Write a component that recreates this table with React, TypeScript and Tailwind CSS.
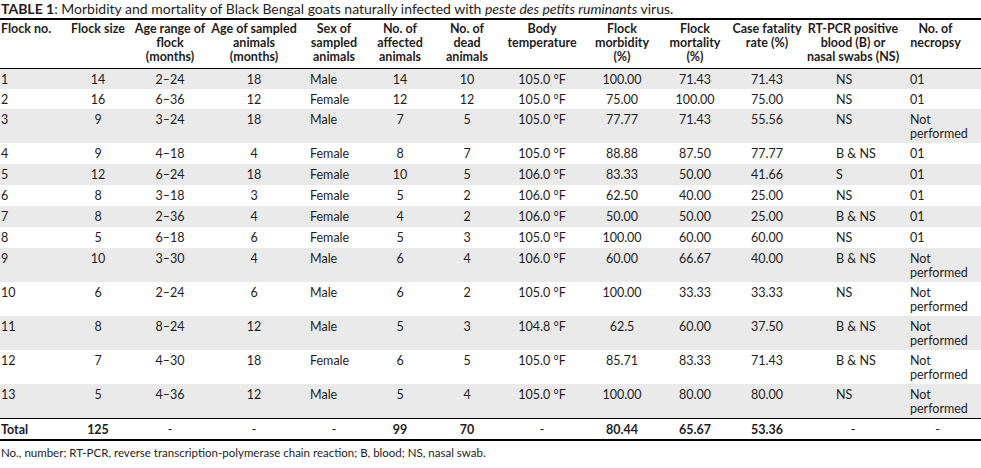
import React from 'react';

type Row = {
  no: string;
  size: string;
  range: string;
  age: string;
  sex: string;
  affected: string;
  dead: string;
  temp: string;
  morbidity: string;
  mortality: string;
  fatality: string;
  pcr: string;
  necropsy: string;
};

const rows: Row[] = [
  { no: '1', size: '14', range: '2–24', age: '18', sex: 'Male', affected: '14', dead: '10', temp: '105.0 °F', morbidity: '100.00', mortality: '71.43', fatality: '71.43', pcr: 'NS', necropsy: '01' },
  { no: '2', size: '16', range: '6–36', age: '12', sex: 'Female', affected: '12', dead: '12', temp: '105.0 °F', morbidity: '75.00', mortality: '100.00', fatality: '75.00', pcr: 'NS', necropsy: '01' },
  { no: '3', size: '9', range: '3–24', age: '18', sex: 'Male', affected: '7', dead: '5', temp: '105.0 °F', morbidity: '77.77', mortality: '71.43', fatality: '55.56', pcr: 'NS', necropsy: 'np' },
  { no: '4', size: '9', range: '4–18', age: '4', sex: 'Female', affected: '8', dead: '7', temp: '105.0 °F', morbidity: '88.88', mortality: '87.50', fatality: '77.77', pcr: 'B & NS', necropsy: '01' },
  { no: '5', size: '12', range: '6–24', age: '18', sex: 'Female', affected: '10', dead: '5', temp: '106.0 °F', morbidity: '83.33', mortality: '50.00', fatality: '41.66', pcr: 'S', necropsy: '01' },
  { no: '6', size: '8', range: '3–18', age: '3', sex: 'Female', affected: '5', dead: '2', temp: '106.0 °F', morbidity: '62.50', mortality: '40.00', fatality: '25.00', pcr: 'NS', necropsy: '01' },
  { no: '7', size: '8', range: '2–36', age: '4', sex: 'Female', affected: '4', dead: '2', temp: '106.0 °F', morbidity: '50.00', mortality: '50.00', fatality: '25.00', pcr: 'B & NS', necropsy: '01' },
  { no: '8', size: '5', range: '6–18', age: '6', sex: 'Female', affected: '5', dead: '3', temp: '105.0 °F', morbidity: '100.00', mortality: '60.00', fatality: '60.00', pcr: 'NS', necropsy: '01' },
  { no: '9', size: '10', range: '3–30', age: '4', sex: 'Male', affected: '6', dead: '4', temp: '106.0 °F', morbidity: '60.00', mortality: '66.67', fatality: '40.00', pcr: 'B & NS', necropsy: 'np' },
  { no: '10', size: '6', range: '2–24', age: '6', sex: 'Male', affected: '6', dead: '2', temp: '105.0 °F', morbidity: '100.00', mortality: '33.33', fatality: '33.33', pcr: 'NS', necropsy: 'np' },
  { no: '11', size: '8', range: '8–24', age: '12', sex: 'Male', affected: '5', dead: '3', temp: '104.8 °F', morbidity: '62.5', mortality: '60.00', fatality: '37.50', pcr: 'B & NS', necropsy: 'np' },
  { no: '12', size: '7', range: '4–30', age: '18', sex: 'Female', affected: '6', dead: '5', temp: '105.0 °F', morbidity: '85.71', mortality: '83.33', fatality: '71.43', pcr: 'B & NS', necropsy: 'np' },
  { no: '13', size: '5', range: '4–36', age: '12', sex: 'Male', affected: '5', dead: '4', temp: '105.0 °F', morbidity: '100.00', mortality: '80.00', fatality: '80.00', pcr: 'NS', necropsy: 'np' },
];

const widths = ['w-[62px]', 'w-[72px]', 'w-[72px]', 'w-[96px]', 'w-[64px]', 'w-[68px]', 'w-[66px]', 'w-[84px]', 'w-[76px]', 'w-[70px]', 'w-[74px]', 'w-[98px]', 'w-[79px]'];

const headers: React.ReactNode[] = [
  <span className="block text-left pl-[1px]">Flock no.</span>,
  <>Flock size</>,
  <>Age range of<br />flock<br />(months)</>,
  <>Age of sampled<br />animals<br />(months)</>,
  <>Sex of<br />sampled<br />animals</>,
  <>No. of<br />affected<br />animals</>,
  <>No. of<br />dead<br />animals</>,
  <>Body<br />temperature</>,
  <>Flock<br />morbidity<br />(%)</>,
  <>Flock<br />mortality<br />(%)</>,
  <>Case fatality<br />rate (%)</>,
  <>RT-PCR positive<br />blood (B) or<br />nasal swabs (NS)</>,
  <span className="block pr-[12px]">No. of<br />necropsy</span>,
];

const cell = 'align-top pt-[4px] whitespace-nowrap';

export default function App() {
  return (
    <div className="w-[981px] h-[468px] bg-white text-[#1f1c1d] font-['Lato','Liberation_Sans',sans-serif] text-[12.5px] leading-[14px]">
      {/* Caption */}
      <div className="h-[20px] border-b-2 border-black pl-[1px] pt-[1px] text-[14px] leading-[16px] whitespace-nowrap">
        <span className="font-bold">TABLE 1</span>: Morbidity and mortality of Black Bengal goats naturally infected with{' '}
        <i>peste des petits ruminants</i> virus.
      </div>

      <table className="table-fixed border-collapse w-[981px]">
        <colgroup>
          {widths.map((w, i) => (
            <col key={i} className={w} />
          ))}
        </colgroup>
        <thead>
          <tr className="h-[48px] border-b border-black">
            {headers.map((h, i) => (
              <th key={i} className="align-top pt-[2px] font-bold text-center whitespace-nowrap">
                {h}
              </th>
            ))}
          </tr>
        </thead>
        <tbody>
          {rows.map((r, i) => {
            const tall = r.necropsy === 'np';
            const bg = i % 2 === 0 ? 'bg-[#eaeaea]' : 'bg-white';
            const h = tall ? 'h-[34px]' : i === 1 ? 'h-[20px]' : 'h-[21px]';
            return (
              <tr key={r.no} className={`${bg} ${h}`}>
                <td className={`${cell} text-left pl-[1px]`}>{r.no}</td>
                <td className={`${cell} text-center`}>{r.size}</td>
                <td className={`${cell} text-center`}>{r.range}</td>
                <td className={`${cell} text-center`}>{r.age}</td>
                <td className={`${cell} text-left pl-[8px]`}>{r.sex}</td>
                <td className={`${cell} text-center`}>{r.affected}</td>
                <td className={`${cell} text-center`}>{r.dead}</td>
                <td className={`${cell} text-center`}>{r.temp}</td>
                <td className={`${cell} text-center`}>{r.morbidity}</td>
                <td className={`${cell} text-center`}>{r.mortality}</td>
                <td className={`${cell} text-center`}>{r.fatality}</td>
                <td className={`${cell} text-left pl-[32px]`}>{r.pcr}</td>
                <td className={`${cell} text-left pl-[8px]`}>
                  {tall ? (
                    <>
                      Not
                      <br />
                      performed
                    </>
                  ) : (
                    r.necropsy
                  )}
                </td>
              </tr>
            );
          })}
          <tr className="h-[22px] border-t border-black border-b-2 border-b-black font-bold">
            <td className="align-top pt-[4px] text-left pl-[1px]">Total</td>
            <td className="align-top pt-[4px] text-center">125</td>
            <td className="align-top pt-[4px] text-center font-normal">-</td>
            <td className="align-top pt-[4px] text-center font-normal">-</td>
            <td className="align-top pt-[4px] text-center font-normal">-</td>
            <td className="align-top pt-[4px] text-center">99</td>
            <td className="align-top pt-[4px] text-center">70</td>
            <td className="align-top pt-[4px] text-center font-normal">-</td>
            <td className="align-top pt-[4px] text-center">80.44</td>
            <td className="align-top pt-[4px] text-center">65.67</td>
            <td className="align-top pt-[4px] text-center">53.36</td>
            <td className="align-top pt-[4px] text-center font-normal">-</td>
            <td className="align-top pt-[4px] text-center font-normal pr-[8px]">-</td>
          </tr>
        </tbody>
      </table>

      {/* Footnote */}
      <p className="pt-[5px] pl-[1px] text-[11.5px] leading-[14px] whitespace-nowrap">
        No., number; RT-PCR, reverse transcription-polymerase chain reaction; B, blood; NS, nasal swab.
      </p>
    </div>
  );
}
